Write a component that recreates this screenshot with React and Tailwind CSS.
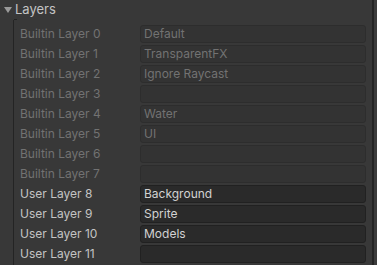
const LAYERS = [
  { label: 'Builtin Layer 0', value: 'Default', builtin: true },
  { label: 'Builtin Layer 1', value: 'TransparentFX', builtin: true },
  { label: 'Builtin Layer 2', value: 'Ignore Raycast', builtin: true },
  { label: 'Builtin Layer 3', value: '', builtin: true },
  { label: 'Builtin Layer 4', value: 'Water', builtin: true },
  { label: 'Builtin Layer 5', value: 'UI', builtin: true },
  { label: 'Builtin Layer 6', value: '', builtin: true },
  { label: 'Builtin Layer 7', value: '', builtin: true },
  { label: 'User Layer 8', value: 'Background' },
  { label: 'User Layer 9', value: 'Sprite' },
  { label: 'User Layer 10', value: 'Models' },
  { label: 'User Layer 11', value: '' },
];

function LayerRow({ label, value, builtin }) {
  return (
    <div className="flex items-center h-[20px] shrink-0">
      <span className={`w-[120px] pl-[6px] text-[12px] leading-none ${builtin ? 'text-[#727272]' : 'text-[#c4c4c4]'}`}>
        {label}
      </span>
      <div
        className={`ml-[6px] w-[226px] h-[18px] rounded-[3px] border flex items-center px-[3px] text-[12px] leading-none ${
          builtin
            ? 'bg-[#333333] border-[#2d2d2d] text-[#727272]'
            : 'bg-[#2a2a2a] border-[#212121] text-[#d2d2d2]'
        }`}
      >
        {value}
      </div>
    </div>
  );
}

export default function App() {
  return (
    <div
      className="w-[377px] h-[265px] overflow-hidden bg-[#383838] flex"
      style={{ fontFamily: 'Inter, "Noto Sans", sans-serif' }}
    >
      <div className="w-[372px] flex flex-col">
        {/* foldout header */}
        <div className="h-[20px] flex items-center shrink-0">
          <svg width="14" height="20" viewBox="0 0 14 20" className="ml-[1px]">
            <path d="M3 7 L11 7 L7 13 Z" fill="#9a9a9a" />
          </svg>
          <span className="text-[13px] leading-none text-[#c4c4c4] -mt-[2px]">Layers</span>
        </div>
        <div className="ml-[13px] flex-1 border-l border-[#242424] relative pt-[4px] flex flex-col">
          <div className="absolute -top-px left-0 w-[3px] h-px bg-[#242424]" />
          {LAYERS.map((l) => (
            <LayerRow key={l.label} {...l} />
          ))}
          <div className="ml-[126px] w-[226px] h-[18px] mt-px rounded-[3px] border border-[#212121] bg-[#2a2a2a] shrink-0" />
        </div>
      </div>
      <div className="w-[2px] bg-[#242424]" />
      <div className="flex-1 bg-[#3c3c3c]" />
    </div>
  );
}
